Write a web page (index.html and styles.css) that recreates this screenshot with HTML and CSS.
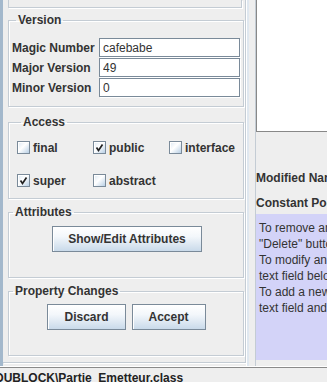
FILE: index.html
```html
<!DOCTYPE html>
<html lang="en">
<head>
    <meta charset="UTF-8">
    <title>Class Properties</title>
    <link rel="stylesheet" href="styles.css">
</head>
<body>
    <div class="window">
        <div class="main">
            <div class="edge"></div>
            <div class="props">
                <div class="prev-group"></div>

                <fieldset class="group version">
                    <legend>Version</legend>
                    <div class="field-row">
                        <label>Magic Number</label>
                        <input type="text" value="cafebabe">
                    </div>
                    <div class="field-row">
                        <label>Major Version</label>
                        <input type="text" value="49">
                    </div>
                    <div class="field-row">
                        <label>Minor Version</label>
                        <input type="text" value="0">
                    </div>
                </fieldset>

                <fieldset class="group access">
                    <legend>Access</legend>
                    <div class="flags">
                        <label class="flag"><span class="box"></span>final</label>
                        <label class="flag"><span class="box checked"><svg viewBox="0 0 13 13"><path d="M3.5 6.5 L5.5 9.5 L9.5 3.5" /></svg></span>public</label>
                        <label class="flag"><span class="box"></span>interface</label>
                        <label class="flag"><span class="box checked"><svg viewBox="0 0 13 13"><path d="M3.5 6.5 L5.5 9.5 L9.5 3.5" /></svg></span>super</label>
                        <label class="flag"><span class="box"></span>abstract</label>
                    </div>
                </fieldset>

                <fieldset class="group attributes">
                    <legend>Attributes</legend>
                    <div class="buttons">
                        <button class="wide">Show/Edit Attributes</button>
                    </div>
                </fieldset>

                <fieldset class="group changes">
                    <legend>Property Changes</legend>
                    <div class="buttons">
                        <button>Discard</button>
                        <button>Accept</button>
                    </div>
                </fieldset>
            </div>
            <div class="splitter"></div>
            <div class="pool">
                <div class="text-area"></div>
                <div class="pool-label modified">Modified Name</div>
                <div class="pool-label">Constant Pool</div>
                <div class="help">
                    <div>To remove an entry, select it and press the</div>
                    <div>"Delete" button.</div>
                    <div>To modify an entry, select it and edit the</div>
                    <div>text field below.</div>
                    <div>To add a new entry, type it in the</div>
                    <div>text field and press "Add".</div>
                </div>
            </div>
        </div>
        <div class="status">DUBLOCK\Partie_Emetteur.class</div>
    </div>
</body>
</html>
```

FILE: styles.css
```css
body {
    margin: 0;
    background-color: #eeeeee;
    font-family: "Liberation Sans", Arial, sans-serif;
    font-size: 12px;
    color: #333333;
}
.window {
    width: 327px;
    height: 382px;
    overflow: hidden;
}
.main {
    display: flex;
    height: 366px;
}
.edge {
    width: 3px;
    background-color: #a3b8cc;
    flex-shrink: 0;
}
.props {
    width: 243px;
    flex-shrink: 0;
    padding-left: 5px;
    border-right: 1px solid #c4ccd4;
    border-bottom: 1px solid #c4ccd4;
    box-shadow: 1px 1px 0 #ffffff;
    height: 363px;
    box-sizing: border-box;
}
.prev-group {
    height: 8px;
    width: 234px;
    border: 1px solid #c4ccd4;
    border-top: none;
    box-shadow: 1px 1px 0 #ffffff;
    box-sizing: border-box;
}
.group {
    margin: 0;
    padding: 0;
    width: 236px;
    box-sizing: border-box;
    border: 1px solid #c4ccd4;
    box-shadow: inset 1px 1px 0 #ffffff, 1px 1px 0 #ffffff;
    min-width: 0;
}
.group legend {
    margin-left: 4px;
    padding: 0 2px;
    font-weight: bold;
    line-height: 14px;
    color: #333333;
}
.version {
    margin-top: 5px;
    padding: 11px 2px 8px 3px;
}
.field-row {
    display: flex;
    align-items: center;
    height: 19px;
    margin-bottom: 1px;
}
.field-row label {
    width: 87px;
    font-weight: bold;
}
.field-row input {
    width: 141px;
    height: 19px;
    box-sizing: border-box;
    margin: 0;
    padding: 0 3px;
    border: 1px solid #7a8a99;
    box-shadow: 1px 1px 0 #ffffff;
    font-family: "Liberation Sans", Arial, sans-serif;
    font-size: 12px;
    color: #333333;
    background: #ffffff;
}
.access {
    margin-top: 8px;
    padding: 12px 8px 11px 8px;
}
.flags {
    display: grid;
    grid-template-columns: 76px 76px 76px;
    row-gap: 20px;
}
.flag {
    display: flex;
    align-items: center;
    height: 13px;
    font-weight: bold;
    gap: 3px;
}
.box {
    width: 11px;
    height: 11px;
    border: 1px solid #7a8a99;
    background: linear-gradient(135deg, #dde8f3, #ffffff 45%, #b8cfe5);
    box-shadow: inset 1px 1px 0 #ffffff;
    position: relative;
}
.box svg {
    position: absolute;
    left: -1px;
    top: -1px;
    width: 13px;
    height: 13px;
}
.box svg path {
    fill: none;
    stroke: #222222;
    stroke-width: 1.7;
}
.attributes {
    margin-top: 6px;
    padding: 7px 0 25px 0;
}
.changes {
    margin-top: 6px;
    padding: 6px 0 25px 0;
}
.buttons {
    display: flex;
    justify-content: center;
    gap: 5px;
}
button {
    height: 26px;
    padding: 0 16px;
    font-family: "Liberation Sans", Arial, sans-serif;
    font-size: 12px;
    font-weight: bold;
    color: #333333;
    border: 1px solid #7a8a99;
    background: linear-gradient(#ffffff, #f3f7fb 40%, #c9daea);
    box-shadow: inset 1px 1px 0 #ffffff;
    margin-left: 1px;
}
button.wide {
    padding: 0 15px;
    margin-left: 2px;
}
.splitter {
    width: 8px;
    flex-shrink: 0;
    border-left: 1px solid #ffffff;
    border-right: 1px solid #c4ccd4;
    box-shadow: inset 2px 0 0 #dfe7ef;
}
.pool {
    flex: 1;
    min-width: 0;
    overflow: hidden;
    white-space: nowrap;
}
.text-area {
    height: 131px;
    background: #ffffff;
    border-left: 1px solid #888888;
    border-bottom: 1px solid #888888;
}
.pool-label {
    font-weight: bold;
    line-height: 14px;
    color: #333333;
}
.modified {
    margin-top: 39px;
    margin-bottom: 11px;
}
.help {
    margin-top: 4px;
    height: 146px;
    background-color: #d3d3f8;
    padding: 6px 0 0 3px;
    box-sizing: border-box;
    line-height: 16px;
    color: #333333;
}
.status {
    border-top: 1px solid #8a8a8a;
    box-shadow: 0 -1px 0 #ffffff;
    margin-top: 1px;
    padding-top: 3px;
    margin-left: -5px;
    font-weight: bold;
    color: #222222;
    line-height: 14px;
}
```
